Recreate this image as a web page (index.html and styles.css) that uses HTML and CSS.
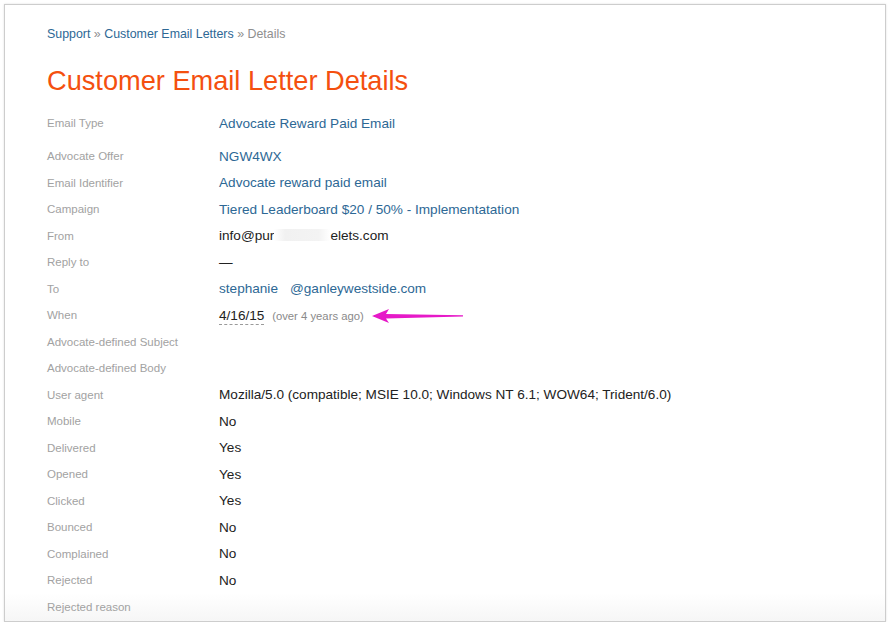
FILE: index.html
```html
<!DOCTYPE html>
<html lang="en">
<head>
<meta charset="utf-8">
<title>Customer Email Letter Details</title>
<link rel="stylesheet" href="styles.css">
</head>
<body>
<div class="page">
  <nav class="crumbs"><a href="#">Support</a> <span class="sep">»</span> <a href="#">Customer Email Letters</a> <span class="sep">»</span> <span class="current">Details</span></nav>
  <h1 class="title">Customer Email Letter Details</h1>
  <div class="details">
    <div class="row first"><div class="label">Email Type</div><div class="value"><a href="#">Advocate Reward Paid Email</a></div></div>
    <div class="row"><div class="label">Advocate Offer</div><div class="value"><a href="#">NGW4WX</a></div></div>
    <div class="row"><div class="label">Email Identifier</div><div class="value"><a href="#">Advocate reward paid email</a></div></div>
    <div class="row"><div class="label">Campaign</div><div class="value"><a href="#">Tiered Leaderboard $20 / 50% - Implementatation</a></div></div>
    <div class="row"><div class="label">From</div><div class="value">info@pur<span class="redact wide"></span>elets.com</div></div>
    <div class="row"><div class="label">Reply to</div><div class="value">—</div></div>
    <div class="row"><div class="label">To</div><div class="value"><a href="#">stephanie<span class="redact narrow"></span>@ganleywestside.com</a></div></div>
    <div class="row"><div class="label">When</div><div class="value"><abbr class="date" title="2015-04-16">4/16/15</abbr> <span class="ago">(over 4 years ago)</span></div></div>
    <div class="row"><div class="label">Advocate-defined Subject</div><div class="value"></div></div>
    <div class="row"><div class="label">Advocate-defined Body</div><div class="value"></div></div>
    <div class="row"><div class="label">User agent</div><div class="value">Mozilla/5.0 (compatible; MSIE 10.0; Windows NT 6.1; WOW64; Trident/6.0)</div></div>
    <div class="row"><div class="label">Mobile</div><div class="value">No</div></div>
    <div class="row"><div class="label">Delivered</div><div class="value">Yes</div></div>
    <div class="row"><div class="label">Opened</div><div class="value">Yes</div></div>
    <div class="row"><div class="label">Clicked</div><div class="value">Yes</div></div>
    <div class="row"><div class="label">Bounced</div><div class="value">No</div></div>
    <div class="row"><div class="label">Complained</div><div class="value">No</div></div>
    <div class="row"><div class="label">Rejected</div><div class="value">No</div></div>
    <div class="row"><div class="label">Rejected reason</div><div class="value"></div></div>
  </div>
  <svg class="arrow" width="96" height="16" viewBox="0 0 96 16" aria-hidden="true">
    <path d="M1 8 L18 1 L15 6 L92 7.3 L92 8.5 L15 10.5 L18 15 Z" fill="#e619c8"/>
  </svg>
</div>
</body>
</html>
```
FILE: styles.css
```css
html, body {
  margin: 0;
  padding: 0;
  background: #ffffff;
}

body {
  font-family: "Liberation Sans", Arial, Helvetica, sans-serif;
  color: #222222;
}

.page {
  position: relative;
  box-sizing: border-box;
  margin: 4px 5px 0 4px;
  height: 618px;
  border: 1px solid #cdcdcd;
  box-shadow: 0 0 2px rgba(0, 0, 0, 0.12);
  padding: 21px 42px 0 42px;
  overflow: hidden;
  background: linear-gradient(to bottom, #ffffff calc(100% - 28px), #f6f6f6);
}

a {
  color: #2d6895;
  text-decoration: none;
}

.crumbs {
  font-size: 12.4px;
  line-height: 16px;
  height: 16px;
  color: #8a8a8a;
}

.crumbs .sep,
.crumbs .current {
  color: #8f8f8f;
}

.title {
  margin: 22px 0 0 0;
  font-size: 27.2px;
  line-height: 33px;
  font-weight: normal;
  color: #f4500f;
}

.details {
  margin-top: 13px;
}

.row {
  display: grid;
  grid-template-columns: 172px 1fr;
  align-items: baseline;
  height: 26.5px;
  line-height: 26.5px;
}

.row.first {
  height: 33px;
}

.label {
  font-size: 11.5px;
  color: #a2a2a2;
}

.value {
  font-size: 13.6px;
  color: #222222;
  white-space: nowrap;
  position: relative;
  top: 0.5px;
}

.redact {
  display: inline-block;
  height: 12px;
  vertical-align: -1px;
}

.redact.wide {
  width: 56px;
  background: linear-gradient(to right, #ffffff, #f1f1f1 20%, #f3f3f3 80%, #ffffff);
}

.redact.narrow {
  width: 12px;
}

.date {
  text-decoration: none;
  border-bottom: 1px dashed #9a9a9a;
  padding-bottom: 1px;
}

.ago {
  font-size: 11.3px;
  color: #8a8a8a;
  margin-left: 4px;
}

.arrow {
  position: absolute;
  left: 366px;
  top: 303px;
}
```
